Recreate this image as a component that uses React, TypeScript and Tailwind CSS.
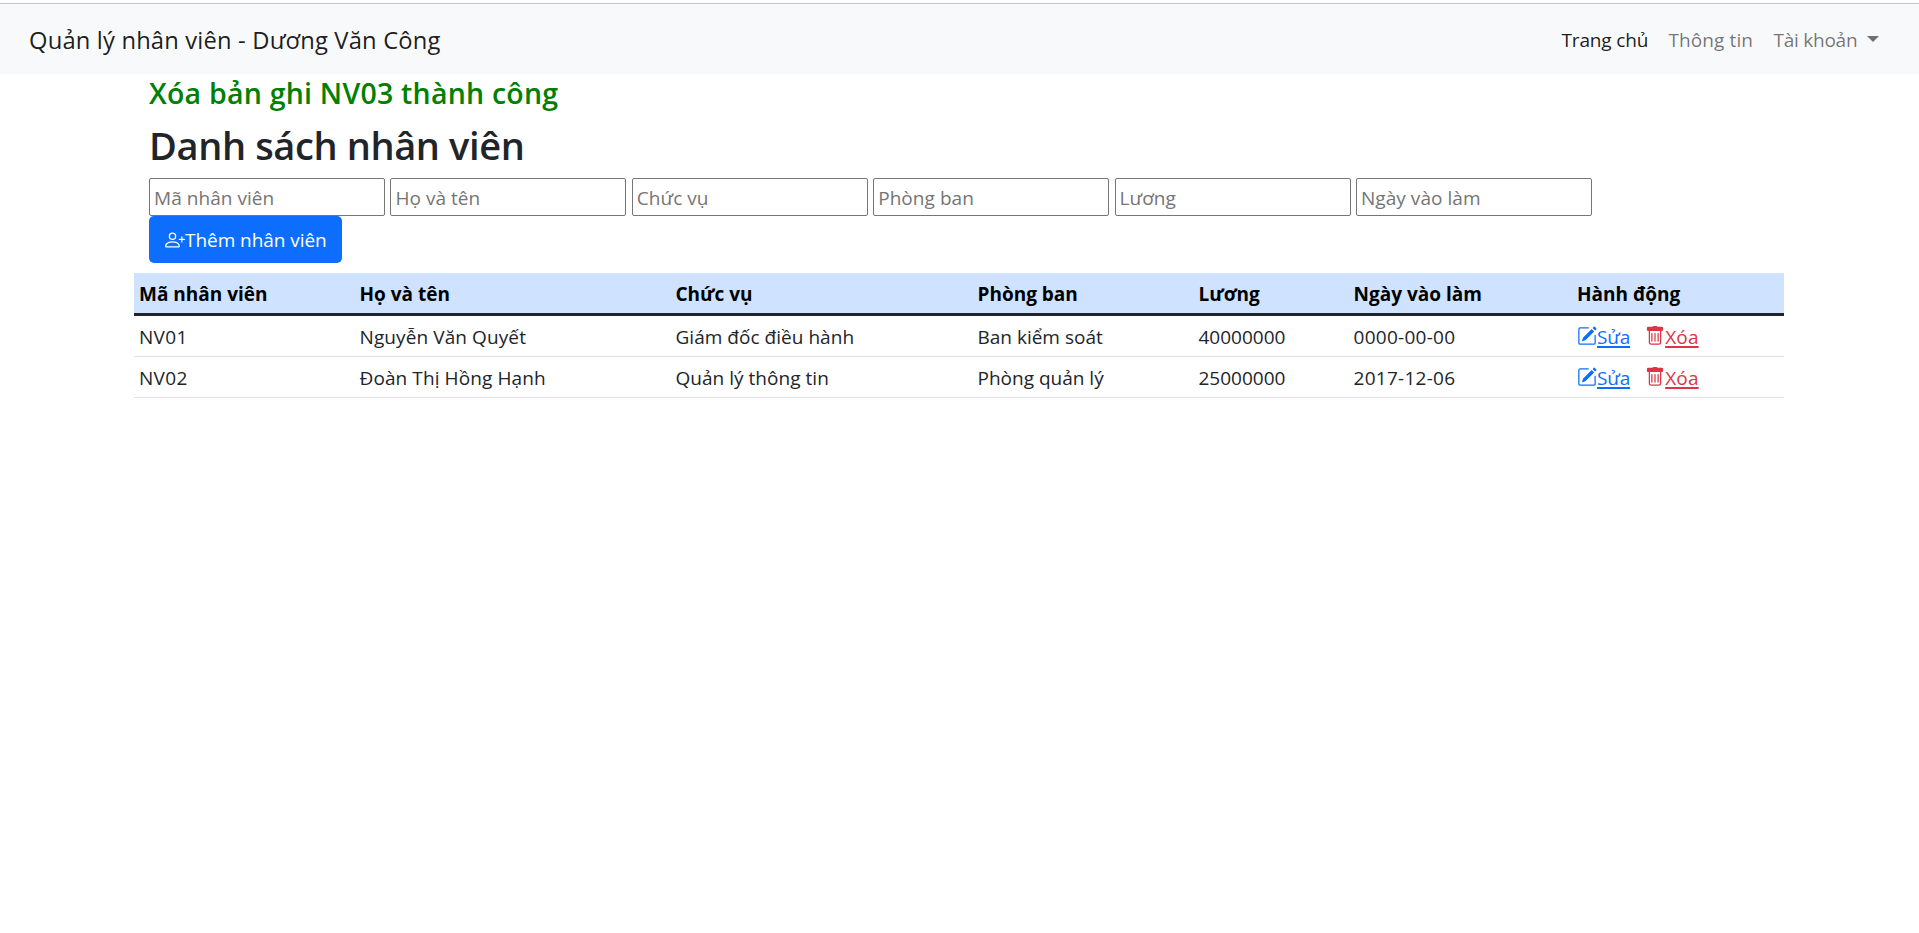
import { BsPencilSquare, BsPersonPlus } from "react-icons/bs";

const columns = ["Mã nhân viên", "Họ và tên", "Chức vụ", "Phòng ban", "Lương", "Ngày vào làm"];

const rows = [
  ["NV01", "Nguyễn Văn Quyết", "Giám đốc điều hành", "Ban kiểm soát", "40000000", "0000-00-00"],
  ["NV02", "Đoàn Thị Hồng Hạnh", "Quản lý thông tin", "Phòng quản lý", "25000000", "2017-12-06"],
];

const cellTracking = [
  "tracking-[0.3px]",
  "tracking-[0.1px]",
  "tracking-[0.03px]",
  "tracking-normal",
  "tracking-normal",
  "tracking-[0.27px]",
];

function TrashIcon() {
  return (
    <svg viewBox="0 0 16 16" className="-mt-0.5 size-5" fill="currentColor">
      <path d="M5.5 5.5A.5.5 0 0 1 6 6v6a.5.5 0 0 1-1 0V6a.5.5 0 0 1 .5-.5zm2.5 0a.5.5 0 0 1 .5.5v6a.5.5 0 0 1-1 0V6a.5.5 0 0 1 .5-.5zm3 .5a.5.5 0 0 0-1 0v6a.5.5 0 0 0 1 0V6z" />
      <path
        fillRule="evenodd"
        d="M14.5 3a1 1 0 0 1-1 1H13v9a2 2 0 0 1-2 2H5a2 2 0 0 1-2-2V4h-.5a1 1 0 0 1-1-1V1.6a1 1 0 0 1 1-1H6a1 1 0 0 1 1-.6h2a1 1 0 0 1 1 .6h3.5a1 1 0 0 1 1 1V3zM4.118 4 4 4.059V13a1 1 0 0 0 1 1h6a1 1 0 0 0 1-1V4.059L11.882 4H4.118z"
      />
    </svg>
  );
}

export default function App() {
  return (
    <div className="min-h-screen bg-white pt-[3px] text-[19px] leading-[30px] text-[#212529] [font-family:'Open_Sans','Noto_Sans',sans-serif]">
      <nav className="flex h-[71px] items-center justify-between border-t border-[#c8c8c8] bg-[#f8f9fa] pt-0.5 pr-10 pl-[29px]">
        <a className="text-[23.75px] tracking-[0.17px] text-black/90">Quản lý nhân viên - Dương Văn Công</a>
        <div className="flex items-center text-black/55">
          <a className="w-[107px] tracking-[-0.15px] text-black/90">Trang chủ</a>
          <a className="w-[105px] tracking-[0.1px]">Thông tin</a>
          <a className="flex items-center">
            <span className="w-[93.5px] tracking-[-0.25px]">Tài khoản</span>
            <span className="-mt-[3px] border-x-6 border-t-6 border-x-transparent border-t-black/55" />
          </a>
        </div>
      </nav>
      <main className="ml-[134px] w-[1650px]">
        <div className="px-[15px]">
          <h4 className="h-[46px] pt-px text-[28.5px] leading-9 font-semibold tracking-[0.23px] text-[#008000]">
            Xóa bản ghi NV03 thành công
          </h4>
          <h2 className="h-[58px] pt-px text-[38px] leading-12 font-semibold tracking-[-0.38px]">Danh sách nhân viên</h2>
          <div className="flex gap-[5.4px]">
            {columns.map((c) => (
              <input
                key={c}
                placeholder={c}
                className="h-[38px] w-[236px] rounded-[2px] border border-[#767676] px-1 pt-0.5 tracking-[0.05px] placeholder:text-[#757575]"
              />
            ))}
          </div>
          <button className="flex h-[47px] w-[193px] items-center rounded-[5px] bg-[#0d6efd] pl-4 text-white">
            <BsPersonPlus className="size-5" />
            <span className="pt-px tracking-[-0.05px] whitespace-nowrap">Thêm nhân viên</span>
          </button>
        </div>
        <table className="mt-2.5 w-full table-fixed border-separate border-spacing-0 text-left">
          <colgroup>
            <col className="w-[220.5px]" />
            <col className="w-[316px]" />
            <col className="w-[302px]" />
            <col className="w-[221px]" />
            <col className="w-[155px]" />
            <col className="w-[223.5px]" />
            <col />
          </colgroup>
          <thead>
            <tr className="bg-[#cfe2ff] text-black">
              {[...columns, "Hành động"].map((c) => (
                <th key={c} className="h-[43px] border-b-3 border-[#212529] px-[5px] pt-px pb-0 font-bold">
                  {c}
                </th>
              ))}
            </tr>
          </thead>
          <tbody>
            {rows.map((r) => (
              <tr key={r[0]}>
                {r.map((v, i) => (
                  <td key={v} className="h-[41px] border-b border-[#dee2e6] px-[5px] pt-px">
                    <span className={cellTracking[i]}>{v}</span>
                  </td>
                ))}
                <td className="h-[41px] border-b border-[#dee2e6] px-[5px] pt-px">
                  <div className="flex items-center">
                    <a className="flex items-center text-[#0d6efd]">
                      <BsPencilSquare className="-mt-0.5 size-5" />
                      <span className="tracking-[-0.15px] underline decoration-2 underline-offset-2">Sửa</span>
                    </a>
                    <a className="ml-[15px] flex items-center text-[#dc3545]">
                      <TrashIcon />
                      <span className="tracking-[0.2px] underline decoration-2 underline-offset-2">Xóa</span>
                    </a>
                  </div>
                </td>
              </tr>
            ))}
          </tbody>
        </table>
      </main>
    </div>
  );
}
